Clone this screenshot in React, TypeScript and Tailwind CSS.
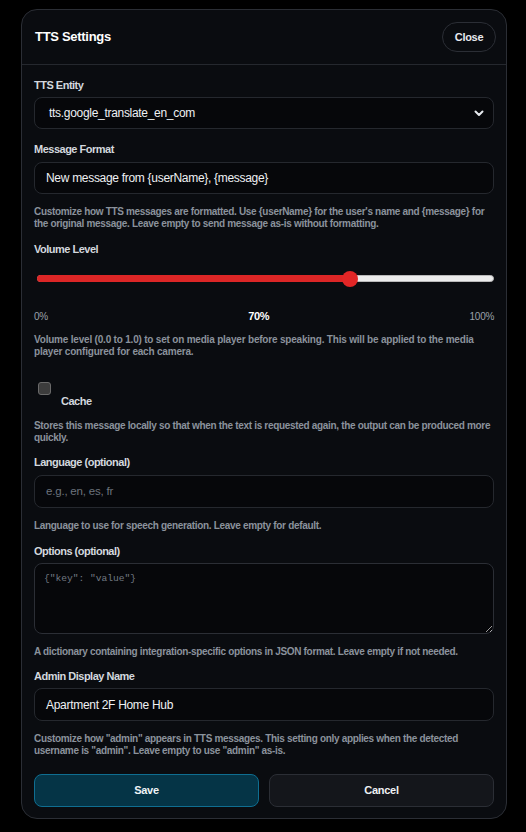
import React from "react";

const sans = { fontFamily: '"Liberation Sans", Arial, sans-serif' };

function Label({ children, className = "" }: { children: React.ReactNode; className?: string }) {
  return (
    <div className={`text-[11px] leading-[16px] font-bold tracking-[-0.5px] text-[#d3d8de] ${className}`}>
      {children}
    </div>
  );
}

function Help({
  children,
  className = "",
  tracking = "tracking-[-0.32px]",
}: {
  children: React.ReactNode;
  className?: string;
  tracking?: string;
}) {
  return (
    <p className={`text-[10px] leading-[12px] font-bold text-[#8a929c] ${tracking} ${className}`}>
      {children}
    </p>
  );
}

const formatHelp =
  "Customize how TTS messages are formatted. Use {userName} for the user's name and {message} for the original message. Leave empty to send message as-is without formatting.";
const formatValue = "New message from {userName}, {message}";

export default function App() {
  return (
    <div className="min-h-[832px] w-[526px] bg-black pt-[9px] pl-[21px]" style={sans}>
      <div className="w-[486px] rounded-[16px] border border-[#2b2e35] bg-[#0a0c10]">
        <div className="flex h-[55px] items-center justify-between border-b border-[#25282e] pl-[13px] pr-[10px]">
          <h2 className="text-[13px] font-bold tracking-[-0.3px] text-white">TTS Settings</h2>
          <button className="flex h-[30px] w-[54px] items-center justify-center rounded-full border border-[#2b2e35] text-[11px] font-bold tracking-[-0.3px] text-[#e6e9ee]">
            Close
          </button>
        </div>

        <div className="flex flex-col px-3 pt-3 pb-[11px]">
          <Label>TTS Entity</Label>
          <div className="mt-1 flex h-[32px] items-center justify-between rounded-[8px] border border-[#25282e] bg-[#06070a] pl-[14px] pr-[9px]">
            <span className="text-[12px] tracking-[-0.3px] text-[#eef0f3]">tts.google_translate_en_com</span>
            <svg width="10" height="7" viewBox="0 0 10 7" fill="none">
              <path d="M1.5 1.5 L5 5 L8.5 1.5" stroke="#e6e9ee" strokeWidth="2" strokeLinecap="round" strokeLinejoin="round" />
            </svg>
          </div>

          <Label className="mt-3">Message Format</Label>
          <div className="mt-[5px] flex h-[32px] items-center rounded-[8px] border border-[#25282e] bg-[#06070a] pl-[11px]">
            <span className="text-[12px] tracking-[-0.3px] text-[#eef0f3]">{formatValue}</span>
          </div>
          <Help className="mt-3">{formatHelp}</Help>

          <Label className="mt-[11px]">Volume Level</Label>
          <div className="relative mt-[14px] ml-[3px] h-[16px]">
            <div className="absolute left-0 right-0 top-[4px] h-[7px] rounded-full border border-[#b9b9b9] bg-[#ececec]" />
            <div className="absolute left-0 top-[4px] h-[7px] w-[316px] rounded-l-full bg-[#dc2626]" />
            <div className="absolute left-[305px] top-0 h-[16px] w-[16px] rounded-full bg-[#e22626]" />
          </div>
          <div className="mt-[22px] flex h-[14px] items-center justify-between">
            <span className="text-[10px] tracking-[-0.3px] text-[#9aa1aa]">0%</span>
            <span className="text-[11px] font-bold tracking-[-0.3px] text-white">70%</span>
            <span className="text-[10px] tracking-[-0.3px] text-[#9aa1aa]">100%</span>
          </div>
          <Help className="mt-[11px]" tracking="tracking-[-0.2px]">
            Volume level (0.0 to 1.0) to set on media player before speaking. This will be applied to the media player configured for each camera.
          </Help>

          <div className="mt-[24px] flex h-[27px] items-start">
            <div className="ml-1 h-[13px] w-[13px] rounded-[3px] border border-[#6a6a6a] bg-[#3c3c3c]" />
            <span className="ml-[10px] mt-[11px] text-[11px] leading-[16px] font-bold tracking-[-0.5px] text-[#d3d8de]">Cache</span>
          </div>
          <Help className="mt-[11px]">
            Stores this message locally so that when the text is requested again, the output can be produced more quickly.
          </Help>

          <Label className="mt-[10px]">Language (optional)</Label>
          <div className="mt-[5px] flex h-[33px] items-center rounded-[8px] border border-[#25282e] bg-[#06070a] pl-[11px]">
            <span className="text-[11.5px] tracking-[-0.2px] text-[#6c737c]">e.g., en, es, fr</span>
          </div>
          <Help className="mt-3">Language to use for speech generation. Leave empty for default.</Help>

          <Label className="mt-[11px]">Options (optional)</Label>
          <textarea
            readOnly
            placeholder={'{"key": "value"}'}
            className="mt-1 h-[71px] w-full rounded-[8px] border border-[#2b2e35] bg-[#06070a] px-[9px] py-[8px] text-[9.6px] leading-[14px] text-[#eef0f3] outline-none placeholder:text-[#737a83]"
            style={{ fontFamily: '"Liberation Mono", "DejaVu Sans Mono", monospace' }}
          />
          <Help className="mt-3">A dictionary containing integration-specific options in JSON format. Leave empty if not needed.</Help>

          <Label className="mt-[10px]">Admin Display Name</Label>
          <div className="mt-1 flex h-[33px] items-center rounded-[8px] border border-[#25282e] bg-[#06070a] pl-[11px]">
            <span className="text-[12px] tracking-[-0.3px] text-[#eef0f3]">Apartment 2F Home Hub</span>
          </div>
          <Help className="mt-3">
            Customize how "admin" appears in TTS messages. This setting only applies when the detected username is "admin". Leave empty to use "admin" as-is.
          </Help>

          <div className="mt-[17px] grid grid-cols-2 gap-[10px]">
            <button className="h-[33px] rounded-[8px] border border-[#0f6e91] bg-[#053446] text-[11px] font-bold tracking-[-0.3px] text-[#eef3f6]">
              Save
            </button>
            <button className="h-[33px] rounded-[8px] border border-[#2b2e35] bg-[#14161b] text-[11px] font-bold tracking-[-0.3px] text-[#eef0f3]">
              Cancel
            </button>
          </div>
        </div>
      </div>
    </div>
  );
}
